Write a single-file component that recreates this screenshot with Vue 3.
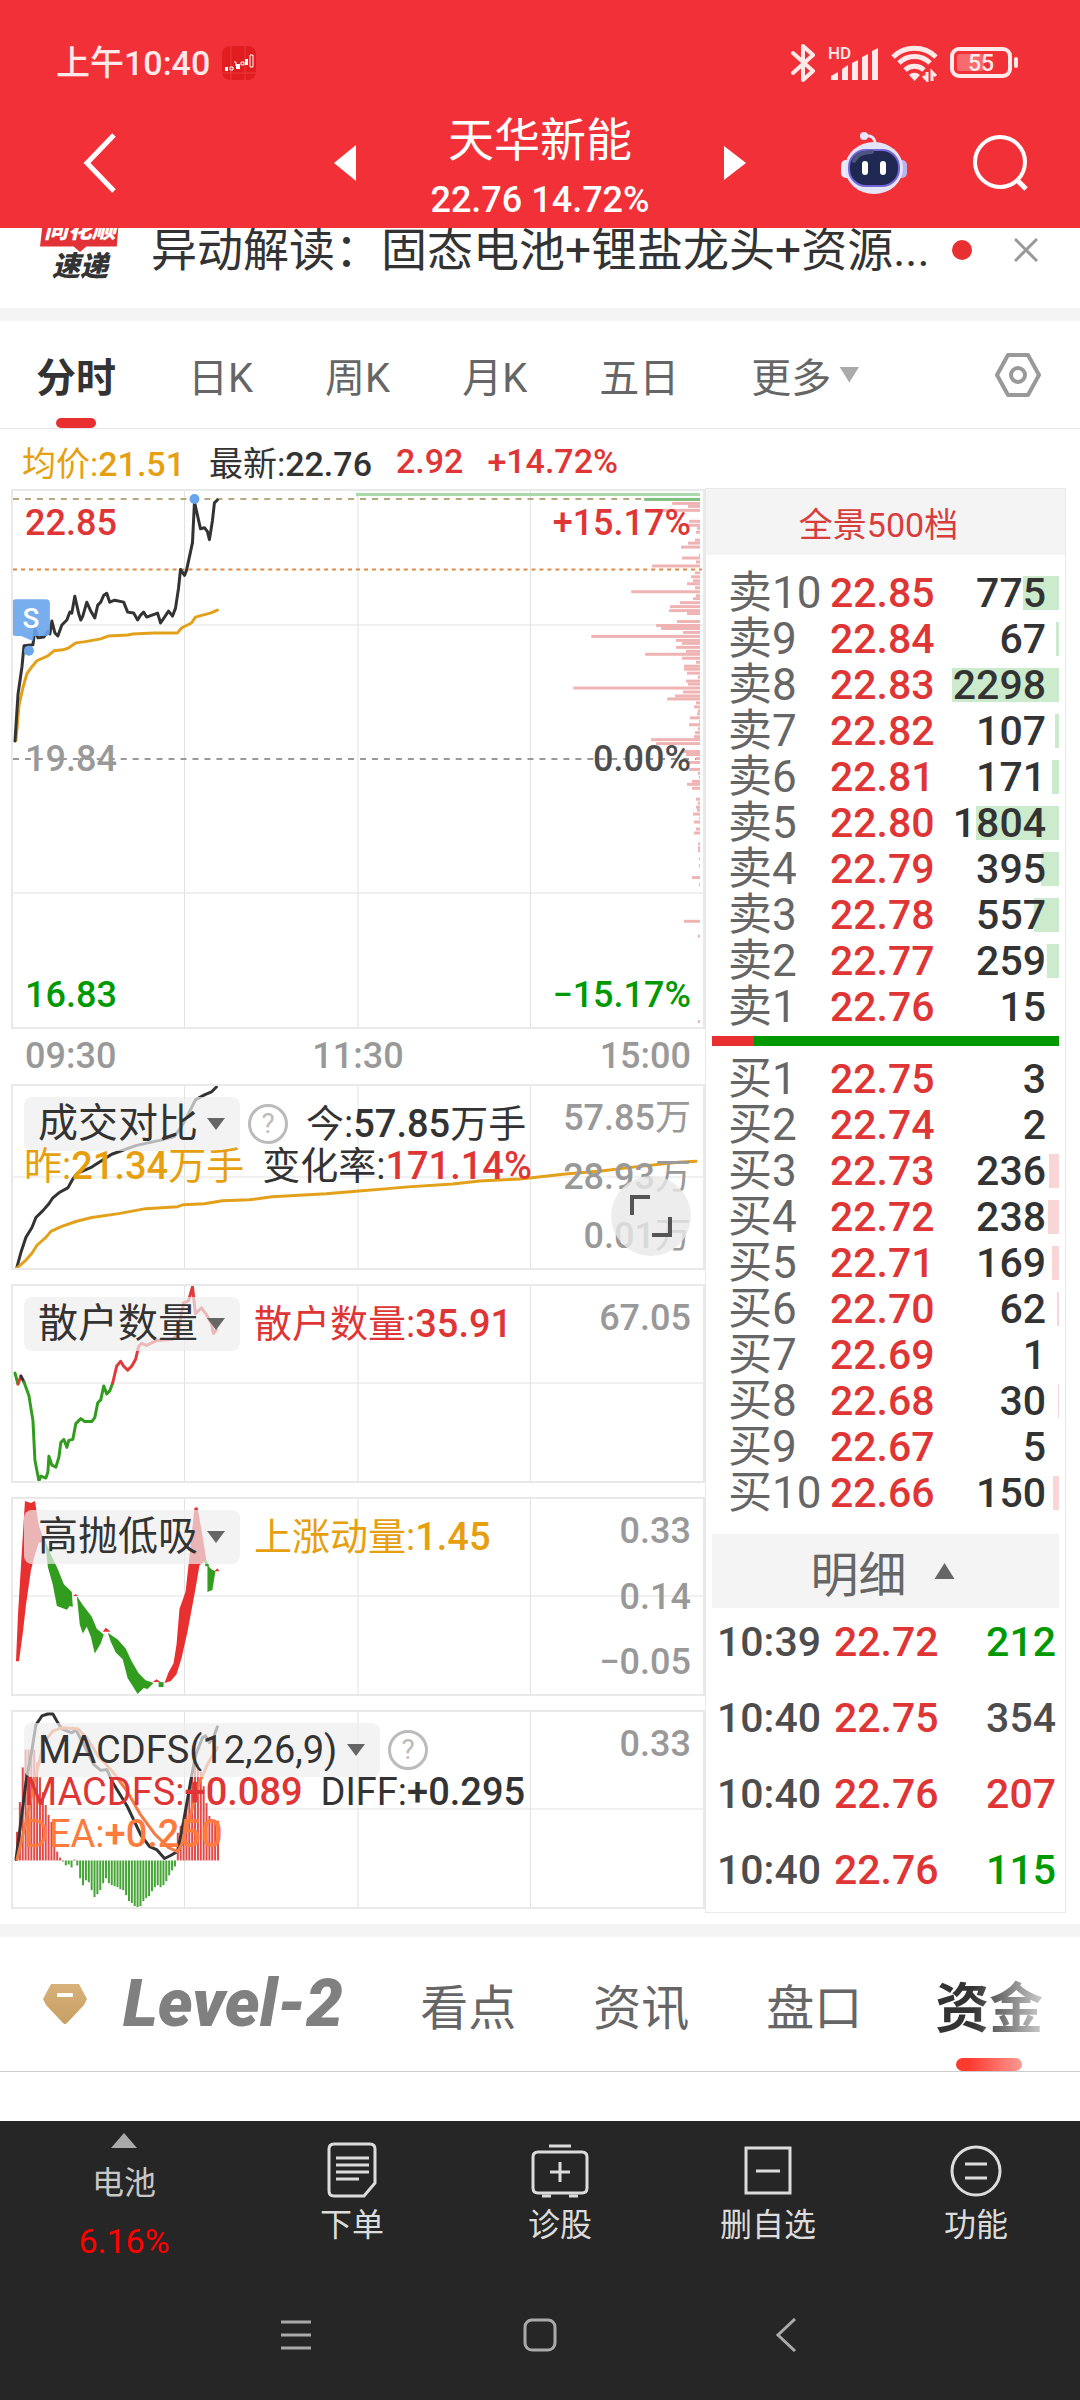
<template>
  <div class="page">
    <header class="top">
      <div class="status">
        <span class="clock">上午10:40</span>
        <svg class="app-badge" viewBox="0 0 34 34">
          <rect width="34" height="34" rx="8" fill="#e21d20" />
          <path d="M9 0v34M23 0v34M0 27h34" stroke="#ec3a3a" stroke-width="1" />
          <path d="M3 21h3v4h-3zM14 18h4v5h-4zM23 13h3v6h-3z" fill="#fff" />
          <path d="M8 21h3v3h-3zM12 16h2v4M19 16h3v3h-3zM28 9h3v12h-3z" fill="none" stroke="#fff" stroke-width="1" />
        </svg>
        <div class="status-icons">
          <svg width="26" height="40" viewBox="0 0 26 40">
            <path d="M2 10l20 18-10 9V3l10 9L2 30" fill="none" stroke="#ffe9e9" stroke-width="4" stroke-linejoin="round" stroke-linecap="round" />
          </svg>
          <svg width="52" height="38" viewBox="0 0 52 38">
            <text x="0" y="15" class="hd">HD</text>
            <g fill="#ffe9e9">
              <path d="M3 36v-4l7-4v8zM14 36V25l6-4v15zM24 36V19l6-3v20zM34 36V13l6-3v26zM44 36V7l6-3v32z" />
            </g>
          </svg>
          <svg width="48" height="38" viewBox="0 0 48 38">
            <path d="M2 13a31 31 0 0 1 43 0M8 19a22 22 0 0 1 31 0M14 26a14 14 0 0 1 19 0" fill="none" stroke="#ffe9e9" stroke-width="5" />
            <path d="M18 31a8 8 0 0 1 11 0l-5.500 6z" fill="#ffe9e9" />
            <path d="M36 28v8l-4-4M41 37v-9l4 4" fill="none" stroke="#ffe9e9" stroke-width="3" />
          </svg>
          <svg width="70" height="32" viewBox="0 0 70 32">
            <rect x="2" y="2" width="58" height="27" rx="7" fill="none" stroke="#ffe9e9" stroke-width="4" />
            <rect x="7" y="7" width="27" height="17" rx="3" fill="#f76a6e" />
            <rect x="64" y="10" width="4" height="11" rx="2" fill="#ffe9e9" />
            <text x="31" y="24" text-anchor="middle" class="battery">55</text>
          </svg>
        </div>
      </div>

      <div class="titlebar">
        <button class="plain back" aria-label="返回">
          <svg width="36" height="60" viewBox="0 0 36 60"><path d="M32 2L5 30l27 28" fill="none" stroke="#fff" stroke-width="5" /></svg>
        </button>
        <div class="stock">
          <button class="plain" aria-label="上一只">
            <svg width="22" height="36" viewBox="0 0 22 36"><path d="M22 0v36L0 18z" fill="#fff" /></svg>
          </button>
          <div class="name">
            <h1>天华新能</h1>
            <p class="num">22.76 14.72%</p>
          </div>
          <button class="plain" aria-label="下一只">
            <svg width="22" height="36" viewBox="0 0 22 36"><path d="M0 1v34l22-17z" fill="#fff" /></svg>
          </button>
        </div>
        <div class="tools">
          <button class="plain" aria-label="助手">
            <svg width="68" height="64" viewBox="0 0 68 64">
              <path d="M24 5c8-1 11 2 11 8" fill="none" stroke="#e8e6fa" stroke-width="3" />
              <circle cx="24" cy="5" r="4" fill="#e8e6fa" />
              <rect x="1" y="29" width="12" height="18" rx="5" fill="#eceafd" />
              <rect x="55" y="29" width="12" height="18" rx="5" fill="#b7b6ea" />
              <ellipse cx="34" cy="37" rx="29" ry="26" fill="#e4e3f8" />
              <rect x="9" y="19" width="50" height="36" rx="17" fill="#1e2850" stroke="#7265d8" stroke-width="2" />
              <path d="M14 30c3-7 9-9 18-9" fill="none" stroke="#4c557e" stroke-width="4" stroke-linecap="round" />
              <rect x="22" y="30" width="6" height="14" rx="3" fill="#fff" />
              <rect x="40" y="30" width="6" height="14" rx="3" fill="#fff" />
            </svg>
          </button>
          <button class="plain" aria-label="搜索">
            <svg width="58" height="58" viewBox="0 0 58 58">
              <circle cx="28" cy="28" r="25" fill="none" stroke="#fff" stroke-width="4" />
              <path d="M45 46l9 9" stroke="#fff" stroke-width="5" />
            </svg>
          </button>
        </div>
      </div>
    </header>

    <section class="notice">
      <div class="notice-inner">
        <div class="brand">
          <span class="brand-red">同花顺</span>
          <span class="brand-black">速递</span>
        </div>
        <a href="#" class="notice-text">异动解读：固态电池+锂盐龙头+资源...</a>
        <i class="dot"></i>
        <button class="plain" aria-label="关闭">
          <svg width="24" height="24" viewBox="0 0 24 24"><path d="M1 1l22 22M23 1L1 23" stroke="#999" stroke-width="3" /></svg>
        </button>
      </div>
    </section>

    <nav class="periods">
      <button v-for="p in periods" :key="p" class="plain period" :class="{ active: p === period }" @click="period = p">
        {{ p }}<i v-if="p === '更多'" class="caret"></i>
      </button>
      <button class="plain settings" aria-label="设置">
        <svg width="46" height="44" viewBox="0 0 46 44">
          <path d="M13 2h20l11 20-11 20H13L2 22z" fill="none" stroke="#999" stroke-width="4" stroke-linejoin="round" />
          <circle cx="23" cy="22" r="7" fill="none" stroke="#999" stroke-width="4" />
        </svg>
      </button>
    </nav>

    <p class="summary">
      <span class="gold">均价:<b class="num">21.51</b></span>
      <span>最新:<b class="num">22.76</b></span>
      <b class="num red">2.92</b>
      <b class="num red">+14.72%</b>
    </p>

    <main class="board">
      <div class="charts">
        <div class="stack main-chart">
          <svg viewBox="0 0 692 540" preserveAspectRatio="none">
            <path class="grid" d="M0 135H692M0 405H692M172 0V540M346 0V540M519 0V540" />
            <path d="M0 8H689" stroke="#b8a77a" stroke-width="2" stroke-dasharray="6 6" />
            <path d="M0 79H691" stroke="#de8a48" stroke-width="2" stroke-dasharray="4 4" />
            <path d="M0 270H689" stroke="#999" stroke-width="2" stroke-dasharray="6 6" />
            <rect x="344" y="2" width="345" height="3" fill="#a9d9a9" />
            <rect x="633" y="7" width="56" height="3" fill="#7fbf7f" />
            <rect v-for="[y, w] in profile" :key="y" :x="689 - w" :y="y - 2" :width="w" height="3" fill="#f0b3b3" />
            <polyline class="line gold-line thick" :points="average" />
            <polyline class="line dark-line thick" :points="price" />
            <g fill="#6aa5ec">
              <path d="M3 109h30a4 4 0 0 1 4 4v29a4 4 0 0 1-4 4H21l-1 5-12-5H3a4 4 0 0 1-4-4v-29a4 4 0 0 1 4-4z" fill-opacity=".9" />
              <circle cx="16" cy="161" r="5" />
              <circle cx="182" cy="8" r="5" />
            </g>
            <text x="18" y="138" text-anchor="middle" class="mark">S</text>
          </svg>
          <div class="scale left num">
            <span class="red">22.85</span>
            <span class="grey">19.84</span>
            <span class="green">16.83</span>
          </div>
          <div class="scale num">
            <span class="red">+15.17%</span>
            <span class="dark">0.00%</span>
            <span class="green">−15.17%</span>
          </div>
        </div>

        <div class="times num"><span>09:30</span><span>11:30</span><span>15:00</span></div>

        <div class="stack panel short">
          <svg viewBox="0 0 692 184" preserveAspectRatio="none">
            <path class="grid" d="M0 92H692M172 0V184M346 0V184M519 0V184" />
            <polyline class="line dark-line" :points="today" />
            <polyline class="line gold-line" :points="yesterday" />
          </svg>
          <div class="scale pale num"><span>57.85<em>万</em></span><span>28.93<em>万</em></span><span>0.01<em>万</em></span></div>
          <div class="legend">
            <div class="row">
              <label class="pill"><select aria-label="指标一"><option>成交对比</option></select></label>
              <button class="plain help" aria-label="说明">?</button>
              <span>今:<b class="num">57.85</b>万手</span>
            </div>
            <div class="row">
              <span class="gold">昨:<b class="num">21.34</b>万手</span>
              <span>变化率:<b class="num red">171.14%</b></span>
            </div>
          </div>
          <button class="plain expand" aria-label="横屏">
            <svg width="42" height="42" viewBox="0 0 42 42"><path d="M2 20V2h18M40 22v18H22" fill="none" stroke="#555" stroke-width="4" /></svg>
          </button>
        </div>

        <div class="stack panel">
          <svg viewBox="0 0 692 197" preserveAspectRatio="none">
            <path class="grid" d="M0 98H692M172 0V197M346 0V197M519 0V197" />
            <polyline class="line green-line" points="2,88 5,99" />
            <polyline class="line red-line" points="5,99 8,91" />
            <polyline class="line dark-line" points="8,91 11,97" />
            <polyline class="line green-line" :points="retailDown" />
            <polyline class="line red-line" :points="retailUp" />
          </svg>
          <div class="scale pale num"><span>67.05</span></div>
          <div class="legend">
            <div class="row">
              <label class="pill wide-gap"><select aria-label="指标二"><option>散户数量</option></select></label>
              <span class="red">散户数量:<b class="num">35.91</b></span>
            </div>
          </div>
        </div>

        <div class="stack panel">
          <svg viewBox="0 0 692 197" preserveAspectRatio="none">
            <path class="grid" d="M0 98H692M172 0V197M346 0V197M519 0V197" />
            <polygon v-for="s in swings" :key="s.points" :points="s.points" :fill="s.up ? '#e83030' : '#319c1e'" />
          </svg>
          <div class="scale pale num"><span>0.33</span><span>0.14</span><span>−0.05</span></div>
          <div class="legend">
            <div class="row">
              <label class="pill wide-gap"><select aria-label="指标三"><option>高抛低吸</option></select></label>
              <span class="gold">上涨动量:<b class="num">1.45</b></span>
            </div>
          </div>
        </div>

        <div class="stack panel">
          <svg viewBox="0 0 692 197" preserveAspectRatio="none">
            <path class="grid" d="M0 98H692M172 0V197M346 0V197M519 0V197" />
            <rect
              v-for="(h, i) in macd"
              :key="i"
              :x="3 + i * 2.88"
              :y="h > 0 ? 150 - h : 150"
              width="2"
              :height="Math.abs(h)"
              :fill="h > 0 ? '#e24a4a' : '#46a336'"
            />
            <polyline class="line dark-line" :points="diff" />
            <polyline class="line orange-line" :points="dea" />
          </svg>
          <div class="scale pale num"><span>0.33</span></div>
          <div class="legend">
            <div class="row">
              <label class="pill latin"><select aria-label="指标四"><option>MACDFS(12,26,9)</option></select></label>
              <button class="plain help" aria-label="说明">?</button>
            </div>
            <div class="row">
              <span class="red">MACDFS:<b class="num">+0.089</b></span>
              <span>DIFF:<b class="num">+0.295</b></span>
            </div>
            <div class="row"><span class="orange">DEA:<b class="num">+0.250</b></span></div>
          </div>
        </div>
      </div>

      <aside class="side">
        <button class="plain depth">全景500档</button>
        <table class="book">
          <tbody>
            <tr v-for="r in asks" :key="r[0]">
              <th>{{ r[0] }}</th>
              <td class="num red">{{ r[1] }}</td>
              <td class="num vol"><i class="bar sell" :style="{ width: r[3] + 'px' }"></i>{{ r[2] }}</td>
            </tr>
          </tbody>
        </table>
        <div class="ratio"><i></i></div>
        <table class="book">
          <tbody>
            <tr v-for="r in bids" :key="r[0]">
              <th>{{ r[0] }}</th>
              <td class="num red">{{ r[1] }}</td>
              <td class="num vol"><i class="bar buy" :style="{ width: r[3] + 'px' }"></i>{{ r[2] }}</td>
            </tr>
          </tbody>
        </table>
        <button class="plain detail">明细<i class="caret up"></i></button>
        <table class="ticks num">
          <tbody>
            <tr v-for="(t, i) in ticks" :key="i">
              <td>{{ t.time }}</td>
              <td class="red">{{ t.price }}</td>
              <td class="tick-vol" :class="t.tone">{{ t.volume }}</td>
            </tr>
          </tbody>
        </table>
      </aside>
    </main>

    <nav class="sections">
      <svg class="gem" width="46" height="42" viewBox="0 0 46 42">
        <defs>
          <linearGradient id="gem" x1="0" y1="0" x2="0" y2="1">
            <stop offset="0" stop-color="#d8b27c" />
            <stop offset="1" stop-color="#c79e62" />
          </linearGradient>
        </defs>
        <path d="M9 1h28l8 15-3 6-17 18q-2 2-4 0L4 22l-3-6z" fill="url(#gem)" />
        <rect x="15" y="10" width="16" height="4" rx="1" fill="#fff" />
      </svg>
      <a href="#" class="level">Level-2</a>
      <a href="#">看点</a>
      <a href="#">资讯</a>
      <a href="#">盘口</a>
      <a href="#" class="current"><span>资金</span></a>
    </nav>

    <div class="content"></div>

    <footer class="bottom">
      <div class="actions">
        <button class="plain sector">
          <i class="caret up"></i>
          <span>电池</span>
          <strong>6.16%</strong>
        </button>
        <button class="plain action">
          <svg width="54" height="58" viewBox="0 0 54 58">
            <path d="M9 3h36q5 0 5 5v34L39 55H9q-5 0-5-5V8q0-5 5-5z" />
            <path d="M11 17h33M11 24h33M11 31h33M11 38h23" />
          </svg>
          下单
        </button>
        <button class="plain action">
          <svg width="60" height="58" viewBox="0 0 60 58">
            <path d="M19 5h22M8 11h44q5 0 5 5v31q0 5-5 5H8q-5 0-5-5V16q0-5 5-5zM30 21v20M20 31h20" />
            <path d="M12 55h9M39 55h9" />
          </svg>
          诊股
        </button>
        <button class="plain action">
          <svg width="50" height="58" viewBox="0 0 50 58"><path d="M3 7h44v45H3zM13 30h24" /></svg>
          删自选
        </button>
        <button class="plain action">
          <svg width="54" height="58" viewBox="0 0 54 58"><circle cx="27" cy="30" r="24" /><path d="M16 23h22M16 37h22" /></svg>
          功能
        </button>
      </div>
      <div class="system">
        <button class="plain" aria-label="多任务">
          <svg width="34" height="34" viewBox="0 0 34 34"><path d="M2 4h30M2 17h30M2 30h30" stroke-width="3" /></svg>
        </button>
        <button class="plain" aria-label="主页">
          <svg width="34" height="34" viewBox="0 0 34 34"><rect x="2" y="2" width="30" height="30" rx="7" stroke-width="3" /></svg>
        </button>
        <button class="plain" aria-label="后退">
          <svg width="34" height="34" viewBox="0 0 34 34"><path d="M28 1L11 17l17 16" stroke-width="3" /></svg>
        </button>
      </div>
    </footer>
  </div>
</template>

<script setup>
import { ref } from 'vue'

const periods = ['分时', '日K', '周K', '月K', '五日', '更多']
const period = ref('分时')

// label, price, volume, bar width
const asks = [
  ['卖10', '22.85', 775, 36],
  ['卖9', '22.84', 67, 3],
  ['卖8', '22.83', 2298, 107],
  ['卖7', '22.82', 107, 4],
  ['卖6', '22.81', 171, 7],
  ['卖5', '22.80', 1804, 83],
  ['卖4', '22.79', 395, 18],
  ['卖3', '22.78', 557, 25],
  ['卖2', '22.77', 259, 12],
  ['卖1', '22.76', 15, 0]
]

const bids = [
  ['买1', '22.75', 3, 0],
  ['买2', '22.74', 2, 0],
  ['买3', '22.73', 236, 10],
  ['买4', '22.72', 238, 11],
  ['买5', '22.71', 169, 7],
  ['买6', '22.70', 62, 2],
  ['买7', '22.69', 1, 0],
  ['买8', '22.68', 30, 1],
  ['买9', '22.67', 5, 0],
  ['买10', '22.66', 150, 6]
]

const ticks = [
  { time: '10:39', price: '22.72', volume: 212, tone: 'green' },
  { time: '10:40', price: '22.75', volume: 354, tone: 'dark' },
  { time: '10:40', price: '22.76', volume: 207, tone: 'red' },
  { time: '10:40', price: '22.76', volume: 115, tone: 'green' }
]

const price =
  '2,252 5,205 9,177 11,156 20,155 22,139 25,148 31,147 35,141 37,144 39,131 42,143 45,146 49,135 54,130 57,122 59,123 62,106 66,124 68,130 70,126 74,112 78,121 82,128 85,115 88,112 91,105 94,103 97,112 102,110 111,112 115,122 121,123 125,130 128,125 131,122 134,127 145,123 148,133 156,121 160,126 163,118 166,98 168,79 172,85 174,80 180,52 182,11 188,38 192,37 195,41 197,49 200,30 202,12 205,9'
const average =
  '3,251 6,216 10,198 14,184 19,177 24,171 35,166 41,161 50,160 56,158 63,153 71,152 88,149 96,146 115,145 120,144 141,143 165,143 169,138 179,133 183,127 190,125 198,123 205,120'

// price level (y) and traded size (width)
const profile = [
  [13, 28], [16, 12], [20, 37], [31, 11], [35, 15], [38, 3], [42, 4], [50, 5], [53, 12], [57, 19],
  [65, 1], [68, 18], [72, 4], [76, 48], [83, 5], [87, 9], [91, 7], [94, 13], [98, 5], [102, 69],
  [106, 4], [109, 7], [113, 20], [117, 30], [121, 31], [124, 13], [132, 23], [136, 44], [139, 39], [143, 17],
  [147, 109], [151, 24], [154, 18], [158, 24], [162, 14], [165, 55], [169, 18], [173, 4], [177, 16], [180, 16],
  [184, 13], [188, 2], [192, 14], [195, 12], [199, 127], [203, 17], [207, 25], [210, 33], [214, 4], [218, 6],
  [222, 2], [225, 3], [229, 10], [233, 1], [236, 11], [240, 2], [244, 5], [248, 6], [251, 49], [255, 44],
  [263, 19], [266, 14], [270, 4], [274, 12], [281, 11], [285, 2], [289, 1], [293, 8], [296, 13], [300, 8],
  [311, 4], [315, 2], [319, 4], [322, 3], [326, 7], [330, 1], [334, 6], [341, 4], [345, 6], [356, 2],
  [360, 2], [363, 2], [371, 1], [378, 1], [390, 8], [397, 1], [434, 16], [449, 2], [535, 2]
]

const today =
  '4,183 8,168 13,153 19,143 23,133 30,126 36,119 40,113 46,108 55,103 60,94 65,88 79,82 99,69 124,60 147,55 162,51 169,41 176,28 183,14 192,9 199,6 204,1'
const yesterday =
  '4,184 13,176 19,169 24,161 33,153 38,147 49,142 63,137 79,133 106,129 133,124 165,122 171,120 192,119 210,116 237,115 260,112 314,109 350,106 373,104 396,102 441,99 468,96 509,94 536,91 554,89 590,86 622,82 667,77 685,76'

const retailDown =
  '11,97 16,111 20,136 22,176 26,197 28,192 33,194 35,188 36,172 39,181 43,183 46,173 48,158 51,155 54,163 56,156 60,155 63,139 68,134 72,137 79,137 82,133 85,118 88,115 91,101 94,109 97,106 100,98'
const retailUp =
  '100,98 104,81 108,76 111,81 115,85 119,81 123,74 126,61 129,58 134,60 144,55 160,54 166,48 168,33 171,17 176,15 180,1 183,28 189,22 194,29 199,38 201,48 204,44'

const swings = [
  { up: true, points: '3,164 5,117 8,67 12,2 18,4 22,2 26,27 32,44 26,44 22,56 18,72 13,107 10,134 6,164' },
  { up: false, points: '32,42 38,56 45,71 51,86 59,94 60,109 57,108 54,112 44,108 40,87 35,69' },
  { up: true, points: '60,98 63,96 65,98' },
  { up: false, points: '64,98 70,107 79,119 84,131 91,137 88,146 82,156 78,139 74,129 70,136 67,127' },
  { up: true, points: '90,134 93,130 98,134' },
  { up: false, points: '95,135 105,142 113,151 119,164 126,176 133,183 141,186 135,192 131,191 125,197 120,189 115,181 110,162 103,155 98,144' },
  { up: true, points: '140,185 144,182 148,185' },
  { up: false, points: '146,185 151,185 151,190 146,190' },
  { up: true, points: '152,186 156,175 161,166 164,147 167,111 173,94 176,67 182,9 185,8 190,37 194,62 187,67 183,91 175,134 169,161 164,177 158,184' },
  { up: false, points: '192,62 194,62 197,68 193,68' },
  { up: false, points: '195,67 199,71 203,73 200,92 195,94' },
  { up: true, points: '202,73 205,70 207,73' }
]

const macd = [
  29, 59, 94, 112, 112, 112, 112, 99, 84, 69, 56, 46, 39, 26, 9, 3, -1, -5, -4, -7, 1, -5, -18, -25, -20, -22, -30, -37,
  -34, -30, -23, -18, -23, -25, -26, -27, -29, -30, -35, -41, -43, -46, -48, -46, -41, -38, -36, -31, -27, -25, -27, -25,
  -21, -15, -10, -6, 28, 35, 38, 56, 70, 85, 103, 98, 90, 75, 58, 45, 38, 38, 40
]
const diff =
  '3,149 7,118 13,71 19,38 23,13 29,4 35,2 40,2 45,11 49,17 59,21 63,18 70,31 81,53 88,59 94,58 101,73 115,96 128,124 137,136 144,139 152,148 158,145 165,141 171,111 178,71 183,44 190,26 193,24 197,31 201,26 205,15'
const dea =
  '4,149 13,111 22,68 31,31 40,19 49,16 65,17 74,26 85,44 99,59 115,81 128,104 142,123 156,137 165,141 169,134 178,104 187,71 196,51 205,36'
</script>

<style>
body {
  background: #fff;
}
</style>

<style scoped>
.page {
  display: flex;
  flex-direction: column;
  min-height: 100vh;
  font-family: Roboto, 'Noto Sans CJK SC', sans-serif;
  color: #333;
}

.page * {
  box-sizing: border-box;
}

h1,
p {
  margin: 0;
  font-weight: 400;
}

svg {
  display: block;
}

a {
  color: inherit;
  text-decoration: none;
}

em {
  font-style: normal;
  font-weight: 400;
}

.plain {
  border: 0;
  padding: 0;
  background: none;
  color: inherit;
  font: inherit;
  cursor: pointer;
}

.num {
  font-weight: 500;
}

.red {
  color: #e03535;
}

.green {
  color: #090;
}

.gold {
  color: #e6a00f;
}

.orange {
  color: #ff7a3d;
}

.grey {
  color: #999;
}

.dark {
  color: #4d4d4d;
}

/* header */
.top {
  background: #f23038;
  color: #fff;
}

.status {
  display: flex;
  align-items: center;
  height: 96px;
  padding: 30px 60px 0 56px;
}

.clock {
  font-size: 34px;
  line-height: 40px;
  font-weight: 500;
  color: #ffe9e9;
}

.app-badge {
  width: 34px;
  margin-left: 12px;
}

.status-icons {
  display: flex;
  align-items: center;
  gap: 11px;
  margin-left: auto;
}

.hd {
  font-size: 17px;
  font-weight: 500;
  fill: #ffe9e9;
}

.battery {
  font-size: 23px;
  font-weight: 500;
  fill: #ffe9e9;
}

.titlebar {
  display: grid;
  grid-template-columns: 1fr auto 1fr;
  align-items: center;
  height: 132px;
  padding: 0 50px 4px;
}

.back {
  justify-self: start;
  margin-left: 32px;
}

.stock {
  display: flex;
  align-items: center;
  gap: 74px;
}

.name {
  padding-top: 14px;
  text-align: center;
}

.name h1 {
  font-size: 46px;
  line-height: 60px;
}

.name p {
  font-size: 36px;
  line-height: 60px;
  white-space: nowrap;
}

.tools {
  display: flex;
  align-items: center;
  justify-content: flex-end;
  gap: 64px;
}

/* notice strip, scrolled partly under the header */
.notice {
  height: 80px;
  overflow: hidden;
}

.notice-inner {
  display: flex;
  align-items: center;
  height: 116px;
  margin-top: -36px;
  padding: 0 42px 0 40px;
}

.brand {
  display: flex;
  flex-direction: column;
  align-items: center;
  width: 80px;
  margin-right: 31px;
  padding-bottom: 12px;
  font-weight: 900;
  font-style: italic;
}

.brand-red {
  width: 80px;
  height: 46px;
  padding-top: 6px;
  font-size: 24px;
  line-height: 36px;
  text-align: center;
  color: #fff;
  background: #e23237;
  clip-path: polygon(6% 0, 100% 0, 96% 88%, 58% 88%, 50% 100%, 42% 88%, 0 88%);
}

.brand-black {
  font-size: 28px;
  line-height: 30px;
}

.notice-text {
  flex: 1;
  font-size: 46px;
  line-height: 60px;
  white-space: nowrap;
}

.dot {
  width: 20px;
  height: 20px;
  margin-right: 42px;
  border-radius: 50%;
  background: #e93030;
}

/* period tabs */
.periods {
  display: flex;
  gap: 72px;
  height: 121px;
  padding: 0 39px 0 36px;
  border-top: 13px solid #f4f4f4;
  border-bottom: 1px solid #e6e6e6;
}

.period {
  position: relative;
  display: flex;
  align-items: center;
  gap: 8px;
  font-size: 40px;
  color: #666;
}

.period.active {
  color: #333;
  font-weight: 700;
}

.period.active::after {
  content: '';
  position: absolute;
  left: 50%;
  bottom: 0;
  width: 40px;
  height: 10px;
  margin-left: -20px;
  border-radius: 5px;
  background: #e93030;
}

.caret {
  width: 20px;
  height: 16px;
  background: #aaa;
  clip-path: polygon(0 0, 100% 0, 50% 100%);
}

.caret.up {
  clip-path: polygon(50% 0, 100% 100%, 0 100%);
}

.settings {
  margin-left: auto;
}

.summary {
  display: flex;
  align-items: center;
  gap: 24px;
  height: 60px;
  padding: 4px 22px 0;
  font-size: 34px;
}

/* charts */
.board {
  display: grid;
  grid-template-columns: minmax(0, 694fr) minmax(0, 361fr);
  padding: 0 14px 11px 11px;
}

.stack {
  display: grid;
  position: relative;
  border: 2px solid #e9e9e9;
}

.stack > svg,
.scale,
.legend {
  grid-area: 1 / 1;
}

.stack > svg {
  width: 100%;
  height: 100%;
}

.main-chart {
  height: 540px;
}

.panel {
  height: 199px;
  margin-top: 14px;
}

.panel.short {
  height: 186px;
  margin-top: 0;
}

.grid {
  stroke: #e2e2e2;
  stroke-width: 1;
}

.line {
  fill: none;
  stroke-width: 3;
  stroke-linejoin: round;
  stroke-linecap: round;
}

.dark-line {
  stroke: #333;
}

.gold-line {
  stroke: #e3a01a;
}

.red-line {
  stroke: #e03a3a;
}

.green-line {
  stroke: #319c1e;
}

.orange-line {
  stroke: #f57b45;
}

.mark {
  font-size: 28px;
  font-weight: 500;
  fill: #fff;
}

.scale {
  display: flex;
  flex-direction: column;
  justify-content: space-between;
  align-items: flex-end;
  padding: 12px;
  font-size: 36px;
  line-height: 40px;
}

.scale.left {
  align-items: flex-start;
}

.scale.pale {
  color: #999;
}

.times {
  display: flex;
  justify-content: space-between;
  padding: 0 14px;
  font-size: 36px;
  line-height: 55px;
  color: #999;
}

.legend {
  padding: 17px 12px 0 11px;
}

.row {
  display: flex;
  align-items: center;
  gap: 18px;
  height: 42px;
  font-size: 38px;
  line-height: 42px;
  white-space: nowrap;
}

.pill {
  display: flex;
  align-items: center;
  flex: none;
  height: 54px;
  margin-right: -10px;
  padding: 0 15px 0 14px;
  border-radius: 8px;
  background: rgba(238, 238, 238, 0.7);
}

.pill.wide-gap {
  margin-right: -4px;
}

.pill select {
  appearance: none;
  border: 0;
  padding: 0;
  background: none;
  color: #333;
  font: inherit;
  font-size: 40px;
}

.pill.latin select {
  font-size: 38px;
}

.pill::after {
  content: '';
  width: 18px;
  height: 12px;
  margin-left: 9px;
  background: #666;
  clip-path: polygon(0 0, 100% 0, 50% 100%);
}

.help {
  width: 40px;
  height: 40px;
  border: 3px solid #bbb;
  border-radius: 50%;
  font-size: 28px;
  line-height: 34px;
  color: #bbb;
}

.expand {
  position: absolute;
  right: 12px;
  bottom: 12px;
  display: grid;
  place-items: center;
  width: 80px;
  height: 80px;
  border-radius: 50%;
  background: rgba(232, 232, 232, 0.8);
}

/* order book */
.side {
  border: 1px solid #e9e9e9;
  margin-top: -1px;
}

.depth {
  width: 100%;
  height: 66px;
  margin-bottom: 15px;
  padding-right: 34px;
  padding-left: 20px;
  font-size: 34px;
  color: #d93c3c;
  background: #f4f4f4;
}

.book,
.ticks {
  width: 100%;
  border-collapse: collapse;
  table-layout: fixed;
}

.book th,
.book td {
  position: relative;
  height: 46px;
  padding: 0;
  font-size: 41px;
  line-height: 46px;
}

.book th {
  width: 124px;
  padding-left: 22px;
  font-size: 44px;
  font-weight: 400;
  text-align: left;
  color: #666;
}

.book .vol {
  z-index: 0;
  padding-right: 19px;
  text-align: right;
}

.bar {
  position: absolute;
  z-index: -1;
  top: 6px;
  right: 6px;
  height: 34px;
}

.sell {
  background: #cceacc;
}

.buy {
  background: #f9d6d6;
}

.ratio {
  height: 10px;
  margin: 6px 6px 10px;
  background: #090;
}

.ratio i {
  display: block;
  width: 12%;
  height: 100%;
  background: #e83030;
}

.detail {
  display: flex;
  align-items: center;
  justify-content: center;
  gap: 28px;
  width: calc(100% - 12px);
  height: 74px;
  margin: 18px 6px 0;
  padding-right: 6px;
  font-size: 48px;
  color: #666;
  background: #f4f4f4;
}

.detail .caret {
  background: #666;
}

.ticks td {
  height: 76px;
  padding: 0 9px 0 0;
  font-size: 41px;
  line-height: 68px;
  vertical-align: top;
}

.ticks td:first-child {
  width: 128px;
  padding-left: 11px;
  padding-right: 0;
  color: #4d4d4d;
}

.tick-vol {
  text-align: right;
}

/* section tabs */
.sections {
  display: flex;
  align-items: center;
  gap: 77px;
  height: 148px;
  padding: 0 30px 0 42px;
  border-top: 13px solid #f4f4f4;
  border-bottom: 1px solid #ccc;
  font-size: 48px;
  white-space: nowrap;
  color: #666;
}

.gem {
  flex: none;
  margin-right: -42px;
}

.level {
  font-size: 66px;
  line-height: 72px;
  font-weight: 900;
  font-style: italic;
  color: #808080;
}

.current {
  position: relative;
  display: flex;
  align-items: center;
  height: 100%;
  margin-left: -4px;
  font-size: 54px;
  font-weight: 700;
}

.current span {
  color: transparent;
  background: linear-gradient(90deg, #333 35%, #ccc);
  background-clip: text;
}

.current::after {
  content: '';
  position: absolute;
  left: 50%;
  bottom: 0;
  width: 66px;
  height: 13px;
  margin-left: -33px;
  border-radius: 7px;
  background: linear-gradient(90deg, #fb3a30 20%, #fd9a92);
}

.content {
  height: 49px;
}

/* bottom bars */
.bottom {
  flex: 1;
  background: #262626;
  color: #dcdcdc;
}

.actions {
  display: grid;
  grid-template-columns: 248fr 208fr 208fr 208fr 208fr;
  height: 152px;
  font-size: 32px;
  line-height: 44px;
}

.sector {
  display: flex;
  flex-direction: column;
  align-items: center;
  padding-top: 12px;
  color: #c8c8c8;
}

.sector .caret {
  width: 26px;
  height: 15px;
  margin-bottom: 13px;
}

.sector strong {
  margin-top: 14px;
  font-size: 34px;
  font-weight: 400;
  color: #f00;
}

.action {
  display: flex;
  flex-direction: column;
  align-items: center;
  gap: 4px;
  padding-top: 20px;
}

.action svg {
  fill: none;
  stroke: #dcdcdc;
  stroke-width: 3;
}

.system {
  display: grid;
  grid-template-columns: repeat(3, 34px);
  justify-content: center;
  gap: 210px;
  padding: 45px 0 48px;
}

.system svg {
  fill: none;
  stroke: #aaa;
}
</style>
